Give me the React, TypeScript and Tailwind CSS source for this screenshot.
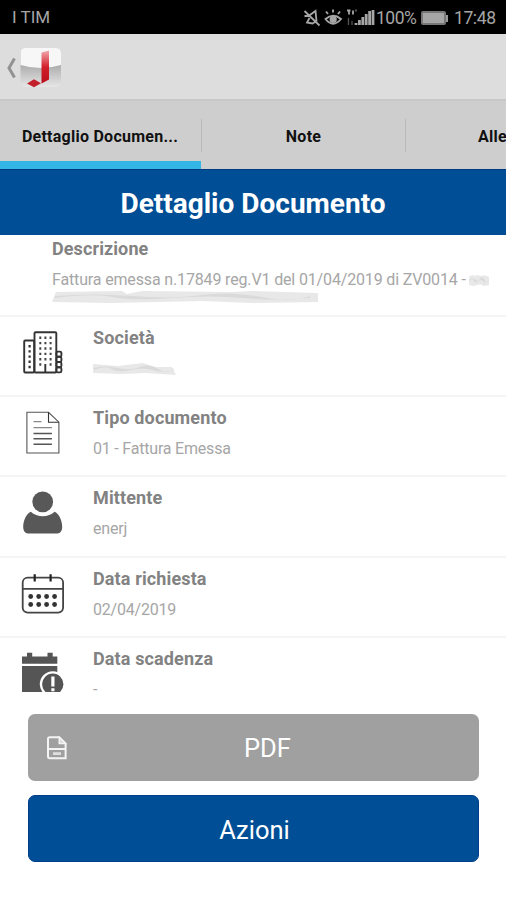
import type { ReactNode } from "react";

const BuildingIcon = () => (
  <svg width="48" height="48" viewBox="0 0 48 48" fill="none" stroke="#333" strokeWidth="1.9">
    <rect x="4.2" y="13.5" width="10" height="32" rx="1" />
    <rect x="14.5" y="5.2" width="21.8" height="40.3" rx="1" />
    {[24.6, 29.8, 35, 40.2].map((y) => (
      <rect key={y} x="36.4" y={y} width="5" height="5.2" rx="1.5" />
    ))}
    <path d="M25.3 37v8.5" />
    <g stroke="#444" strokeWidth="2" strokeDasharray="2.4 2.95">
      <path d="M20.3 9.6V40" />
      <path d="M25.4 9.6V36" />
      <path d="M30.6 9.6V40" />
    </g>
    <path d="M9.6 18v24" stroke="#333" strokeWidth="2.2" strokeDasharray="2.4 2.8" />
  </svg>
);

const DocumentIcon = () => (
  <svg width="48" height="48" viewBox="0 0 48 48" fill="none" stroke="#555" strokeWidth="1.1">
    <path d="M28.5 5.3H6.9V46H38.9V15.2z" />
    <path d="M28.5 5.3V15.2H38.9" stroke="#333" />
    <path d="M13.5 14.7h8M13.5 20.7h18.4" stroke="#888" strokeWidth="1.2" />
    <path d="M13.5 26.5h18.4M13.5 31.8h18.4M13.5 37.3h18.4" strokeWidth="1.5" />
  </svg>
);

const UserIcon = () => (
  <svg width="48" height="48" viewBox="0 0 48 48" fill="#585858">
    <circle cx="22.7" cy="14.8" r="10.4" />
    <path d="M10.8 24.7C17 30.6 28.5 30.6 34.6 24.7C39.5 27 42.2 34 42.2 40C42.2 44.3 40 46.6 36 46.6H9.4C5.4 46.6 3.2 44.3 3.2 40C3.2 34 5.9 27 10.8 24.7z" />
  </svg>
);

const CalendarIcon = () => (
  <svg width="48" height="48" viewBox="0 0 48 48" fill="none" stroke="#444" strokeWidth="1.8">
    <rect x="2.7" y="9.6" width="40.4" height="35" rx="5" />
    <path d="M2.7 20.8h40.4" />
    <path d="M14.7 6.2v7.4M30.6 6.2v7.4" stroke="#222" strokeWidth="2.2" />
    <g fill="#333" stroke="none">
      {[28.5, 36.5].map((cy) =>
        [10.7, 18.7, 26.6, 34.6].map((cx) => <circle key={`${cx}-${cy}`} cx={cx} cy={cy} r="2.4" />)
      )}
    </g>
  </svg>
);

const DeadlineIcon = () => (
  <svg width="48" height="48" viewBox="0 0 48 48" fill="#555">
    <path d="M7 4.8h5.2v3.7h15.3V4.8h5.2v3.7H37.3v7.2H2V8.5H7z" />
    <path d="M2 18h35.3v32H2z" />
    <circle cx="32.8" cy="36.2" r="13" fill="#fff" />
    <circle cx="32.8" cy="36.2" r="10.6" />
    <path d="M31.3 28.5h3.2v10h-3.2zM31.3 40.2h3.2v3h-3.2z" fill="#fff" />
  </svg>
);

const PdfIcon = () => (
  <svg width="20" height="24" viewBox="0 0 20 24" fill="none" stroke="#f4f4f4" strokeWidth="2">
    <path d="M12.2 1.2H2.8Q1 1.2 1 3V20.5Q1 22.3 2.8 22.3H18.6V7.6z" />
    <path d="M12.2 1.2V7.6H18.6z" fill="#dedede" strokeWidth="1.4" />
    <path d="M1 13h17.6" />
    <path d="M6 17.6h8" stroke="#dedede" strokeWidth="2.8" />
  </svg>
);

const Logo = () => (
  <svg width="42" height="40" viewBox="0 0 42 40">
    <defs>
      <linearGradient id="shade" x1="0" y1="0" x2="0" y2="1">
        <stop offset="0.4" stopColor="#a9a9a9" />
        <stop offset="1" stopColor="#e6e6e6" />
      </linearGradient>
      <linearGradient id="red" x1="0" y1="0" x2="0" y2="1">
        <stop offset="0" stopColor="#f0a9ac" />
        <stop offset="0.5" stopColor="#d3202c" />
        <stop offset="1" stopColor="#b80d1b" />
      </linearGradient>
    </defs>
    <rect x="0.5" width="40.5" height="39" rx="5" fill="url(#shade)" />
    <path d="M0.5 17V5Q0.5 0 5.5 0H36Q41 0 41 5V17Q21 23 0.5 17z" fill="#f7f7f7" />
    <path d="M21.5 4.5L29 2.5V31.5L21.5 35.5z" fill="url(#red)" />
    <path d="M7 35.5L14 31.3L21 35.3L14 39.3z" fill="#c3202b" />
  </svg>
);

const StatusIcons = () => (
  <svg width="74" height="20" viewBox="0 0 74 20" fill="none" stroke="#a6a6a6" strokeWidth="1.6">
    {/* muted bell */}
    <path d="M1.5 8H5.5L12.5 3L13.5 13L9.5 15.5L4 14.5L6.5 10M1.5 3L16.5 17.5" strokeWidth="1.8" />
    {/* eye comfort */}
    <path d="M22.5 11Q30 4.5 38 11Q30 20.5 22.5 11zM25 6l-2-2.5M30 4.5V1.5M35 6l2-2.5" strokeWidth="1.9" />
    <circle cx="30.2" cy="11.5" r="2.8" fill="#a6a6a6" />
    <path d="M44 2.5h3.5M46 2.5v4M50 2.5v4M52.5 2.5h1" strokeWidth="1.8" />
    <path d="M45.5 10v7M49 13v4" stroke="#555" strokeWidth="1.3" />
    {/* signal */}
    <path d="M53 17v-2M56.4 17v-5M59.8 17V9M63.2 17V6M66.6 17V3M70 17V2" strokeWidth="2.8" />
  </svg>
);

const Smudge = ({ width, height, short }: { width: number; height: number; short?: boolean }) => (
  <svg width={width} height={height} viewBox="0 0 266 12" preserveAspectRatio="none" className="block">
    <path
      d={
        short
          ? "M0 1L80 3L160 0L200 4L253 4L266 12L170 10L90 11L0 10z"
          : "M4 1L70 0L75 3L90 0L180 1L200 0L266 2V11L200 12L150 10L60 12L0 11z"
      }
      fill="#e8e8e8"
    />
    <path d="M3 5Q40 2 80 5T150 4T210 6T258 5L258 7Q220 10 190 7T120 7T60 6T3 7z" fill="#dadada" />
  </svg>
);

const rows: { label: string; value: ReactNode; icon: ReactNode }[] = [
  { label: "Società", value: <Smudge width={83} height={12} short />, icon: <BuildingIcon /> },
  { label: "Tipo documento", value: "01 - Fattura Emessa", icon: <DocumentIcon /> },
  { label: "Mittente", value: "enerj", icon: <UserIcon /> },
  { label: "Data richiesta", value: "02/04/2019", icon: <CalendarIcon /> },
  { label: "Data scadenza", value: "-", icon: <DeadlineIcon /> },
];

export default function App() {
  return (
    <div className="flex h-[900px] w-[506px] flex-col overflow-hidden bg-white font-['Roboto',sans-serif]">
      {/* status bar */}
      <div className="flex h-[34px] shrink-0 items-center bg-black pt-[2px] pr-[10px] pl-[12px] text-[17px] text-[#a6a6a6]">
        <span>I TIM</span>
        <div className="ml-auto flex items-center">
          <StatusIcons />
          <span className="ml-[-1px] w-[41px] text-[17.5px] tracking-[-0.5px]">100%</span>
          <div className="ml-[4px] flex items-center">
            <div className="h-[14px] w-[25px] rounded-[2px] border-2 border-[#777] bg-[#a6a6a6]" />
            <div className="h-[7px] w-[2px] bg-[#999]" />
          </div>
          <span className="ml-[6px] w-[42px] text-[17.5px] tracking-[-0.4px]">17:48</span>
        </div>
      </div>

      {/* action bar */}
      <div className="flex h-[65px] shrink-0 items-center bg-[#dddddd] pl-[6px]">
        <svg width="11" height="22" viewBox="0 0 11 22" fill="none" stroke="#929292" strokeWidth="3" className="mt-[3px]">
          <path d="M8.500 1.500L3 11L8.500 20.500" />
        </svg>
        <div className="ml-[3px] mt-[2px]">
          <Logo />
        </div>
      </div>

      {/* tabs */}
      <div className="flex h-[70px] shrink-0 overflow-hidden border-t-2 border-[#c8c8c8] bg-[#cecece] text-[16px] font-bold tracking-[0.25px] text-[#111]">
        <div className="flex w-[201px] shrink-0 flex-col">
          <div className="flex flex-1 items-center justify-center pt-[12px] pr-[1px]">Dettaglio Documen...</div>
          <div className="h-[8px] bg-[#33b5e5]" />
        </div>
        <div className="mt-[18px] h-[33px] w-px shrink-0 bg-[#b9b9b9]" />
        <div className="flex w-[203px] shrink-0 justify-center pt-[24px]">Note</div>
        <div className="mt-[18px] h-[33px] w-px shrink-0 bg-[#b9b9b9]" />
        <div className="shrink-0 pt-[24px] pl-[72px]">Allegati</div>
      </div>

      <div className="flex h-[66px] shrink-0 items-center justify-center border-t border-[#003b80] bg-[#004f96] pt-[2px] text-[28px] font-bold text-white">
        Dettaglio Documento
      </div>

      {/* detail list */}
      <div className="h-[457px] shrink-0 overflow-hidden">
        <div className="h-[82px] border-b-2 border-[#f5f5f5] pl-[52px]">
          <div className="pt-[3px] text-[18px] leading-[22px] font-bold tracking-[0.1px] text-[#828282]">Descrizione</div>
          <div className="mt-[9px] flex items-center text-[16px] leading-[22px] tracking-[-0.15px] text-[#a6a6a6]">
            <span className="whitespace-nowrap">Fattura emessa n.17849 reg.V1 del 01/04/2019 di ZV0014 -</span>
            <div className="ml-[3px]">
              <Smudge width={20} height={11} />
            </div>
          </div>
          <Smudge width={266} height={12} />
        </div>
        {rows.map((row) => (
          <div key={row.label} className="flex h-[80.2px] border-b-2 border-[#f5f5f5] pl-[20px]">
            <div className="w-[73px] pt-[10px]">{row.icon}</div>
            <div>
              <div className="pt-[10px] text-[18px] leading-[22px] font-bold tracking-[0.13px] text-[#828282]">
                {row.label}
              </div>
              <div className="mt-[9px] flex h-[22px] items-center text-[16px] leading-[22px] tracking-[-0.2px] text-[#a6a6a6]">
                {row.value}
              </div>
            </div>
          </div>
        ))}
      </div>

      {/* buttons */}
      <div className="flex flex-col gap-[14px] pt-[22px] pr-[27px] pl-[28px] text-[25.5px] text-white">
        <button className="flex h-[67px] items-center rounded-[7px] bg-[#a0a0a0] pl-[19px]">
          <PdfIcon />
          <span className="flex-1 pr-[11px] pt-[2px] text-center">PDF</span>
        </button>
        <button className="h-[67px] rounded-[7px] border border-[#003d8a] bg-[#004f96] pt-[4px] pl-[2px]">Azioni</button>
      </div>
    </div>
  );
}
